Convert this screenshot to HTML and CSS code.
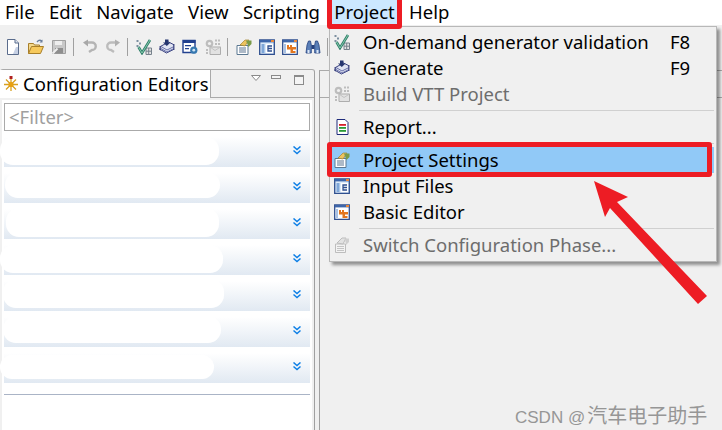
FILE: index.html
```html
<!DOCTYPE html>
<html lang="en">
<head>
<meta charset="utf-8">
<title>Project menu</title>
<link rel="stylesheet" href="styles.css">
</head>
<body>
<svg class="defs" width="0" height="0" aria-hidden="true">
  <symbol id="i-new" viewBox="0 0 16 16"><path d="M2.500 .5h7.500l3.500 3.500v11.500h-11z" fill="#fff" stroke="#5a6c8c"/><path d="M10 .5v3.500h3.500" fill="#dfe6f2" stroke="#5a6c8c"/><path d="M11 8h2v7h-5z" fill="#c6d0e4"/></symbol>
  <symbol id="i-open" viewBox="0 0 16 16"><path d="M.5 14.500v-10h5l1 1.500h5v2" fill="#f3d88c" stroke="#a87f2a"/><path d="M.5 14.500l3-7h12l-3 7z" fill="#f6c95c" stroke="#a87f2a"/><path d="M9 3c1.500-2 3.500-2 5-1" fill="none" stroke="#6b7f9c" stroke-width="1.300"/><path d="M14.500 .5v3h-3z" fill="#6b7f9c"/></symbol>
  <symbol id="i-save" viewBox="0 0 16 16"><path d="M1.500 1.500h13v13h-13z" fill="#c8c8c8" stroke="#a0a0a0"/><path d="M4 2h7v4h-7z" fill="#eee"/><path d="M4 9h8v5.500h-8z" fill="#8e8e8e"/><path d="M1.500 14.500l5-5" stroke="#eee" stroke-width="2"/></symbol>
  <symbol id="i-undo" viewBox="0 0 16 16"><path d="M5 3.500h5a3.500 3.500 0 0 1 0 7.500l-3 2" fill="none" stroke="#b4b4b4" stroke-width="2.400"/><path d="M1 3.500l5-3v7z" fill="#a8a8a8"/></symbol>
  <symbol id="i-redo" viewBox="0 0 16 16"><path d="M11 3.500h-5a3.500 3.500 0 0 0 0 7.500l3 2" fill="none" stroke="#bcbcbc" stroke-width="2.400"/><path d="M15 3.500l-5-3v7z" fill="#b0b0b0"/></symbol>
  <symbol id="i-check" viewBox="0 0 16 16"><path d="M.5 1h2v2h-2zM3 3.500h2v2h-2zM.5 6h2v2h-2z" fill="#7d8fa0"/><path d="M10 9h5.500v6.500h-5.500z" fill="#e4e4e4" stroke="#77828c"/><path d="M12.700 9v6.500M10 12.200h5.500" stroke="#77828c"/><path d="M2.500 8l3.500 6 8-13" fill="none" stroke="#2f7f6a" stroke-width="2.600"/><path d="M2.500 8l3.500 6 8-13" fill="none" stroke="#8fd0b2" stroke-width=".9"/></symbol>
  <symbol id="i-gen" viewBox="0 0 16 16"><path d="M.5 10l7 4 8-4-1.500-1 1.500-1-1.500-1 1.500-1-6-3-9 5 1.500 1-1.500 1 1.500 1z" fill="#dfe3f2" stroke="#39417e"/><path d="M2 7.500l6 3.500 6-3M2 9.500l6 3.500 6-3" fill="none" stroke="#6870a8"/><path d="M6 .5h3.500v3h2l-3.700 3.500-3.800-3.500h2z" fill="#25356f"/></symbol>
  <symbol id="i-win" viewBox="0 0 16 16"><path d="M1 1.500h12v12h-12z" fill="#fff" stroke="#22418f" stroke-width="1.400"/><path d="M1 1h12.500v3h-12.500z" fill="#22418f"/><path d="M3 6h6v1.300h-6zM3 9h4v1.300h-4z" fill="#22418f"/><circle cx="11.800" cy="11.200" r="3.600" fill="#3578b0"/><circle cx="11.800" cy="11.200" r="1.400" fill="#cfe4f4"/></symbol>
  <symbol id="i-vtt" viewBox="0 0 16 16"><circle cx="4.500" cy="4.500" r="3.800" fill="#bdbdbd"/><circle cx="4.500" cy="4.500" r="1.600" fill="#f0f0f0"/><path d="M10 .5h2v2h-2zM13 .5h2v2h-2zM10 4h2v2h-2zM13 4h2v2h-2zM1 10h2v2h-2zM1 13h2v2h-2z" fill="#bdbdbd"/><path d="M5 8h10.500v7.500h-10.500z" fill="#e2e2e2" stroke="#adadad"/><path d="M5 8l5 3.500 5.500-3.500" fill="none" stroke="#c2c2c2"/></symbol>
  <symbol id="i-report" viewBox="0 0 16 16"><path d="M3 .5h8l3 3v12h-11z" fill="#fff" stroke="#1e2b7a"/><path d="M5 5h7v1.800h-7z" fill="#d7202a"/><path d="M5 8h7v1.800h-7z" fill="#2a9a35"/><path d="M5 11h7v1.800h-7z" fill="#2a9a35"/></symbol>
  <symbol id="i-settings" viewBox="0 0 16 16"><path d="M1 6.500h11v9h-11z" fill="#fff" stroke="#5b7892"/><path d="M3 9h7M3 11h7M3 13h7" stroke="#5d7590" stroke-width="1.200"/><path d="M4 6l5-5h4l-4 6z" fill="#edc35e" stroke="#a58430" stroke-width=".7"/><path d="M10 1.500h5.500v3.500l-3 3z" fill="#7a9a48"/></symbol>
  <symbol id="i-input" viewBox="0 0 16 16"><path d="M.7 1h14.600v14.300h-14.600z" fill="#dbe9f8" stroke="#2f4f8f" stroke-width="1.300"/><path d="M1 1h14v2.400h-14z" fill="#3d66aa"/><path d="M12 1h3v2h-3z" fill="#e9873a"/><path d="M2.500 5h3v9h-3z" fill="#7fa7d8"/><path d="M7 5h7v9h-7z" fill="#fff"/><path d="M13 7h-4v2.500h4M13 12h-4v-2.500" fill="none" stroke="#2f4f8f" stroke-width="1.300"/></symbol>
  <symbol id="i-basic" viewBox="0 0 16 16"><path d="M.7 1h14.600v14.300h-14.600z" fill="#fff" stroke="#2f4f8f" stroke-width="1.300"/><path d="M1 1h14v2.400h-14z" fill="#3d66aa"/><path d="M12 1h3v2h-3z" fill="#e9873a"/><path d="M2 5h2v9h-2z" fill="#a8c2e4"/><path d="M5 6h2v2h1v-2h2v2h4v2.500h-3v1.500h2.500v2h-5v-3.500h-3.500z" fill="#e2761f"/></symbol>
  <symbol id="i-find" viewBox="0 0 16 16"><path d="M1 14l1-8 1.500-4h2l.8 4v8zM15 14l-1-8-1.500-4h-2l-.8 4v8z" fill="#5a7fb8" stroke="#23407e" stroke-width=".8"/><path d="M6.500 6h3v4h-3z" fill="#23407e"/><path d="M2.500 11h2v3h-2zM11.500 11h2v3h-2z" fill="#dbe7f6"/></symbol>
  <symbol id="i-switch" viewBox="0 0 16 16"><path d="M1.500 7h10v8.500h-10z" fill="#f3f3f3" stroke="#bdbdbd"/><path d="M3 9.500h7M3 11.500h7M3 13.500h7" stroke="#c4c4c4"/><path d="M3 6l5-5h4l-3 6z" fill="#e2e2e2" stroke="#bdbdbd"/><path d="M11 1.500h4v3.500l-3 3z" fill="#cfcfcf"/></symbol>
  <symbol id="i-chev" viewBox="0 0 8 9"><path d="M.5 .5l3.500 3 3.500-3M.5 4.500l3.500 3 3.500-3" fill="none" stroke="#0d7fe6" stroke-width="1.500"/></symbol>
</svg>

<nav class="menubar">
  <span class="menu-item">File</span>
  <span class="menu-item">Edit</span>
  <span class="menu-item">Navigate</span>
  <span class="menu-item">View</span>
  <span class="menu-item">Scripting</span>
  <span class="menu-item menu-open">Project</span>
  <span class="menu-item">Help</span>
</nav>

<div class="toolbar">
  <svg class="tool"><use href="#i-new"/></svg>
  <svg class="tool"><use href="#i-open"/></svg>
  <svg class="tool"><use href="#i-save"/></svg>
  <span class="tool-sep"></span>
  <svg class="tool"><use href="#i-undo"/></svg>
  <svg class="tool"><use href="#i-redo"/></svg>
  <span class="tool-sep"></span>
  <svg class="tool"><use href="#i-check"/></svg>
  <svg class="tool"><use href="#i-gen"/></svg>
  <svg class="tool"><use href="#i-win"/></svg>
  <svg class="tool"><use href="#i-vtt"/></svg>
  <span class="tool-sep"></span>
  <svg class="tool"><use href="#i-settings"/></svg>
  <svg class="tool"><use href="#i-input"/></svg>
  <svg class="tool"><use href="#i-basic"/></svg>
  <svg class="tool"><use href="#i-find"/></svg>
  <span class="tool-sep"></span>
</div>

<main class="workspace">
  <section class="panel">
    <header class="panel-head">
      <div class="tab">
        <svg class="tab-icon" viewBox="0 0 16 16"><path d="M8 2v13M1 8.500h14M3 3.500l10 10M13 3.500l-10 10" stroke="#d8a020" stroke-width="1.300"/><circle cx="8" cy="8.500" r="2.600" fill="#e8a010"/><path d="M6.500 0h3v3h-3z" fill="#b02020"/></svg>
        <span>Configuration Editors</span>
      </div>
      <div class="view-tools">
        <svg class="vt-menu" viewBox="0 0 10 6"><path d="M.5 .5h9l-4.500 5z" fill="#fff" stroke="#8a8a8a"/></svg>
        <span class="vt-min"></span>
        <span class="vt-max"></span>
      </div>
    </header>
    <div class="panel-body">
      <div class="filter">&lt;Filter&gt;</div>
      <ul class="sections">
        <li class="section"><span class="blot b1"></span><svg class="chev"><use href="#i-chev"/></svg></li>
        <li class="section"><span class="blot b2"></span><svg class="chev"><use href="#i-chev"/></svg></li>
        <li class="section"><span class="blot b3"></span><svg class="chev"><use href="#i-chev"/></svg></li>
        <li class="section"><span class="blot b4"></span><svg class="chev"><use href="#i-chev"/></svg></li>
        <li class="section"><span class="blot b5"></span><svg class="chev"><use href="#i-chev"/></svg></li>
        <li class="section"><span class="blot b6"></span><svg class="chev"><use href="#i-chev"/></svg></li>
        <li class="section"><span class="blot b7"></span><svg class="chev"><use href="#i-chev"/></svg></li>
      </ul>
      <div class="panel-rule"></div>
    </div>
  </section>
  <section class="editor-area">
    <div class="editor-head"></div>
  </section>
</main>

<div class="popup">
  <div class="row"><svg class="row-icon"><use href="#i-check"/></svg><span class="row-label">On-demand generator validation</span><span class="row-key">F8</span></div>
  <div class="row"><svg class="row-icon"><use href="#i-gen"/></svg><span class="row-label">Generate</span><span class="row-key">F9</span></div>
  <div class="row row-off"><svg class="row-icon"><use href="#i-vtt"/></svg><span class="row-label">Build VTT Project</span></div>
  <div class="row-sep"></div>
  <div class="row"><svg class="row-icon"><use href="#i-report"/></svg><span class="row-label">Report...</span></div>
  <div class="row-sep"></div>
  <div class="row row-active"><svg class="row-icon"><use href="#i-settings"/></svg><span class="row-label">Project Settings</span></div>
  <div class="row"><svg class="row-icon"><use href="#i-input"/></svg><span class="row-label">Input Files</span></div>
  <div class="row"><svg class="row-icon"><use href="#i-basic"/></svg><span class="row-label">Basic Editor</span></div>
  <div class="row-sep"></div>
  <div class="row row-off"><svg class="row-icon"><use href="#i-switch"/></svg><span class="row-label">Switch Configuration Phase...</span></div>
</div>

<div class="mark mark-project"></div>
<div class="mark mark-settings"></div>
<svg class="arrow" viewBox="0 0 722 430"><path d="M594 181L628 197L617 202L707 296L698 304L610 208L605 217Z" fill="#ed1c24"/></svg>
<div class="watermark">CSDN @<span class="watermark-cjk">汽车电子助手</span></div>
</body>
</html>
```
FILE: styles.css
```css
* { box-sizing: border-box; }
html, body { margin: 0; padding: 0; }
body {
  position: relative;
  width: 722px;
  height: 430px;
  overflow: hidden;
  display: flex;
  flex-direction: column;
  background: #f0f0f0;
  color: #000;
  font-family: "Noto Sans", "Open Sans", sans-serif;
  font-size: 18.5px;
}
.defs { position: absolute; }
.menubar {
  display: flex;
  height: 25px;
  flex: none;
  background: #fff;
  line-height: 23px;
}
.menu-item { height: 24px; padding: 0 5px; margin-right: 4.3px; }
.menu-open { background: #cce8ff; }
.toolbar {
  display: flex;
  align-items: center;
  flex: none;
  height: 44px;
  padding-left: 1px;
}
.tool { width: 16px; height: 16px; margin: 0 3px 0 4px; flex: none; }
.tool-sep { width: 1px; height: 18px; margin: 0 4px 0 3px; background: #a0a0a0; flex: none; }
.workspace { flex: 1; display: flex; min-height: 0; }
.panel {
  width: 315px;
  flex: none;
  display: flex;
  flex-direction: column;
  border-top: 1px solid #aaa;
  border-right: 1px solid #a0a0a0;
  border-top-left-radius: 3px;
  border-top-right-radius: 3px;
  padding: 0 2px;
}
.panel-head { display: flex; height: 28px; flex: none; margin: 0 -2px; border-bottom: 1px solid #aaa; }
.tab {
  width: 211px;
  height: 28px;
  padding: 0 0 2px 3px;
  background: #fff;
  border-right: 1px solid #aaa;
  display: flex;
  align-items: center;
  gap: 4px;
  white-space: nowrap;
}
.tab-icon { width: 16px; height: 16px; flex: none; margin-top: 2px; }
.view-tools { flex: 1; display: flex; align-items: flex-start; padding: 5px 0 0 40px; }
.vt-menu { width: 10px; height: 6px; }
.vt-min { width: 10px; height: 4px; margin-left: 10px; background: #f4f4f4; border: 1px solid #8a8a8a; }
.vt-max { width: 10px; height: 10px; margin-left: 13px; background: #f4f4f4; border: 1px solid #8a8a8a; border-top-width: 2px; }
.panel-body { flex: 1; margin-top: 2px; background: #fff; padding: 3px 2px 0; position: relative; }
.filter {
  height: 28px;
  border: 1px solid #aaa;
  padding-left: 4px;
  line-height: 26px;
  color: #a0a0a0;
}
.sections { list-style: none; margin: 6px 0 0; padding: 0; display: flex; flex-direction: column; gap: 6px; }
.section {
  position: relative;
  height: 30px;
  display: flex;
  align-items: center;
  justify-content: flex-end;
  padding: 0 9px 4px 0;
  background: linear-gradient(#fff, #e1e9f2);
}
.chev { width: 8px; height: 9px; }
.blot { position: absolute; background: #fff; border-radius: 13px; }
.b1 { left: -4px; top: 0; width: 219px; height: 28px; }
.b2 { left: 1px; top: -1px; width: 215px; height: 26px; }
.b3 { left: 2px; top: -1px; width: 213px; height: 29px; }
.b4 { left: -4px; top: 0; width: 223px; height: 28px; }
.b5 { left: -1px; top: -2px; width: 221px; height: 29px; }
.b6 { left: -1px; top: -1px; width: 218px; height: 27px; }
.b7 { left: -4px; top: 2px; width: 214px; height: 24px; }
.panel-rule { height: 1px; margin-top: 11px; background: #aab4c6; }
.editor-area {
  flex: 1;
  margin: 1px 0 0 4px;
  border-left: 1px solid #a0a0a0;
  border-top: 1px solid #aaa;
}
.editor-head { height: 27px; border-bottom: 1px solid #aaa; }
.popup {
  position: absolute;
  left: 329px;
  top: 26px;
  width: 388px;
  height: 236px;
  background: #f0f0f0;
  border: 1px solid #b8b8b8;
  box-shadow: 3px 3px 3px rgba(0,0,0,.4);
  padding: 2px;
}
.row { height: 26px; padding-bottom: 2px; display: flex; align-items: center; white-space: nowrap; position: relative; }
.row-icon { width: 16px; height: 16px; margin: 2px 13px 0 2px; flex: none; }
.row-label { flex: 1; }
.row-key { width: 44px; }
.row-off { color: #6d6d6d; }
.row-active { background: #91c9f7; }
.row-sep { height: 7px; margin-left: 27px; padding-top: 3px; }
.row-sep::before { content: ""; display: block; height: 1px; background: #d0d0d0; }
.mark { position: absolute; border: 5px solid #ed1c24; border-radius: 3px; }
.mark-project { left: 327px; top: -6px; width: 75px; height: 35px; }
.mark-settings { left: 327px; top: 142px; width: 385px; height: 35px; }
.arrow { position: absolute; left: 0; top: 0; width: 722px; height: 430px; pointer-events: none; }
.watermark {
  position: absolute;
  left: 515px;
  top: 400px;
  color: #969696;
  font-family: "Liberation Sans", "Noto Sans CJK SC", sans-serif;
  font-size: 17px;
  white-space: nowrap;
}
.watermark-cjk { font-family: "Noto Sans CJK SC", sans-serif; font-size: 20px; margin-left: 2px; }
```
